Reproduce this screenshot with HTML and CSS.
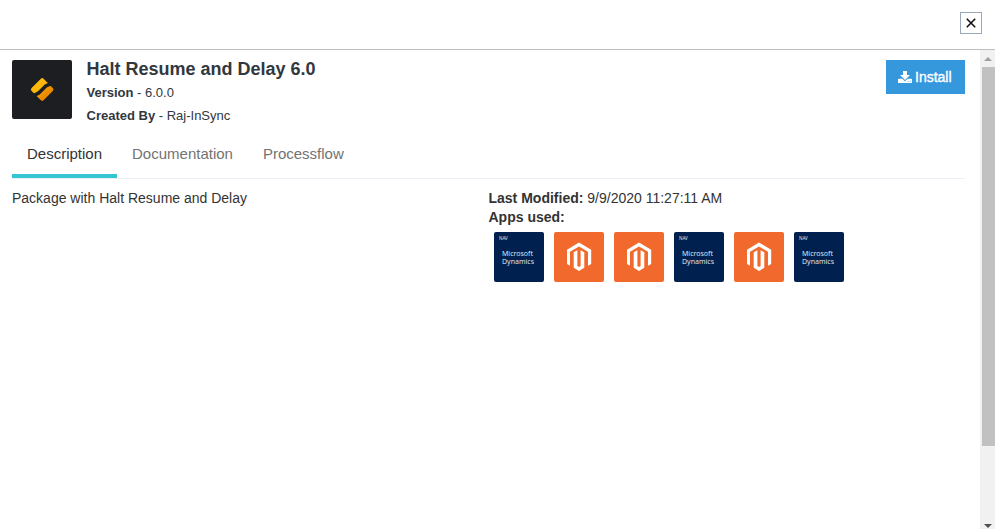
FILE: index.html
```html
<!DOCTYPE html>
<html lang="en">
<head>
<meta charset="utf-8">
<title>Halt Resume and Delay 6.0</title>
<link rel="stylesheet" href="styles.css">
</head>
<body>
<svg class="defs" width="0" height="0" aria-hidden="true">
  <symbol id="magento" viewBox="0 0 50 50">
    <path fill="#fff" d="M25 10.600 37.200 17.700V32l-3.200 1.800V19.700L25 14.500l-9 5.200V33.800L13 32V17.700z"/>
    <path fill="#fff" d="M19.700 20.300 23.400 18.300V34L25 35l1.600-1V18.300l3.700 2V35.800L25 39l-5.300-3.200z"/>
  </symbol>
</svg>
<header class="topbar">
  <button class="close" aria-label="Close"><svg width="10" height="10" viewBox="0 0 10 10"><path d="M.8.8 9.200 9.200M9.200.8.8 9.200" stroke="#111" stroke-width="1.600"/></svg></button>
</header>
<div class="body">
  <main class="content">
    <section class="package">
      <svg class="logo" width="60" height="59" viewBox="0 0 60 59">
        <defs><linearGradient id="amber" x1="0" y1="0" x2="1" y2="0"><stop offset=".3" stop-color="#ffb808"/><stop offset=".8" stop-color="#ee8a00"/></linearGradient></defs>
        <rect width="60" height="59" rx="2" fill="#1c1e21"/>
        <rect x="21.600" y="20.900" width="17.200" height="17.200" rx="2.200" transform="rotate(45 30.200 29.500)" fill="url(#amber)"/>
        <path d="M22.500 35.200 26.500 33.200 34 25.800 38.500 23.800" fill="none" stroke="#1c1e21" stroke-width="3.600" stroke-linejoin="round"/>
      </svg>
      <div class="info">
        <h1>Halt Resume and Delay 6.0</h1>
        <p class="version"><b>Version</b> - 6.0.0</p>
        <p class="author"><b>Created By</b> - Raj-InSync</p>
      </div>
      <button class="install">
        <svg width="14" height="13" viewBox="0 0 14 13" fill="#fff"><path d="M5 0h4v4h3L7 9 2 4h3z"/><path fill-rule="evenodd" d="M.7 7.700h3.500L7 10.300 9.800 7.700h3.500q.7 0 .7.700v3q0 .7-.7.700H.7q-.7 0-.7-.7v-3q0-.7.7-.7zM9.800 10.200h.8v.8h-.8zm2 0h.8v.8h-.8z"/></svg>
        <span>Install</span>
      </button>
    </section>
    <nav class="tabs">
      <a class="tab active">Description</a>
      <a class="tab">Documentation</a>
      <a class="tab">Processflow</a>
    </nav>
    <section class="details">
      <p class="summary">Package with Halt Resume and Delay</p>
      <div class="meta">
        <p><b>Last Modified:</b> 9/9/2020 11:27:11 AM</p>
        <p><b>Apps used:</b></p>
        <div class="apps">
          <div class="app nav"><small>NAV</small><span>Microsoft<br>Dynamics</span></div>
          <div class="app mage"><svg width="50" height="50"><use href="#magento"/></svg></div>
          <div class="app mage"><svg width="50" height="50"><use href="#magento"/></svg></div>
          <div class="app nav"><small>NAV</small><span>Microsoft<br>Dynamics</span></div>
          <div class="app mage"><svg width="50" height="50"><use href="#magento"/></svg></div>
          <div class="app nav"><small>NAV</small><span>Microsoft<br>Dynamics</span></div>
        </div>
      </div>
    </section>
  </main>
  <div class="scrollbar">
    <svg class="up" width="8" height="4" viewBox="0 0 8 4"><path d="M0 4 4 0 8 4z" fill="#a0a0a0"/></svg>
    <div class="thumb"></div>
    <svg class="down" width="8" height="4" viewBox="0 0 8 4"><path d="M0 0h8L4 4z" fill="#505050"/></svg>
  </div>
</div>
</body>
</html>
```
FILE: styles.css
```css
* { box-sizing: border-box; }
body {
  margin: 0;
  height: 529px;
  overflow: hidden;
  background: #fff;
  color: #333;
  font: 14px/19px "Liberation Sans", Arial, sans-serif;
  display: flex;
  flex-direction: column;
}
h1, p { margin: 0; }
button { border: 0; padding: 0; font: inherit; }
svg { display: block; }
.defs { position: absolute; }
.topbar {
  height: 50px;
  flex: none;
  border-bottom: 1px solid #bfbfbf;
  display: flex;
  justify-content: flex-end;
  padding: 12px 13px 0 0;
}
.close {
  width: 22px;
  height: 22px;
  background: #fff;
  border: 1px solid #9aa9b8;
  display: flex;
  align-items: center;
  justify-content: center;
}
.body { flex: 1; display: flex; min-height: 0; }
.content { flex: 1; padding: 10px 15px 0 12px; }
.package { display: flex; height: 70px; }
.info { flex: 1; padding-left: 14.5px; color: #32373e; }
h1 { font-size: 18px; line-height: 20px; margin-top: -1px; }
.version, .author { font-size: 13px; line-height: 23px; }
.version { margin-top: 2px; }
.install {
  width: 79px;
  height: 34px;
  background: #3598dc;
  color: #fff;
  display: flex;
  align-items: center;
  padding-left: 12px;
  gap: 3px;
}
.install span { -webkit-text-stroke: .35px #fff; }
.tabs { display: flex; height: 49px; border-bottom: 1px solid #eceff5; }
.tab { height: 48px; padding: 14px 15px 0; font-size: 15px; color: #737373; white-space: nowrap; }
.tab.active { color: #333; border-bottom: 4px solid #36c6d3; }
.details { display: flex; padding-top: 10px; }
.summary, .meta { width: 476.5px; }
.apps { display: flex; gap: 10px; padding: 5px 0 0 5.5px; }
.app { width: 50px; height: 50px; border-radius: 2px; overflow: hidden; }
.nav {
  background: #002050;
  color: #dce3ee;
  font-family: "Noto Sans", sans-serif;
  font-size: 7px;
  line-height: 8px;
  padding: 4px 0 0 8px;
}
.nav small { display: block; margin-left: -3px; font-size: 4.5px; line-height: 5px; }
.nav span { display: block; margin-top: 9px; white-space: nowrap; }
.mage { background: #f1692d; }
.scrollbar {
  width: 15px;
  background: #f1f1f1;
  display: flex;
  flex-direction: column;
  padding: 7px 0 1px 2px;
}
.up { margin: 0 0 6px 2px; flex: none; }
.thumb { height: 379px; background: #c1c1c1; flex: none; }
.down { margin: auto 0 0 2px; flex: none; }
```
